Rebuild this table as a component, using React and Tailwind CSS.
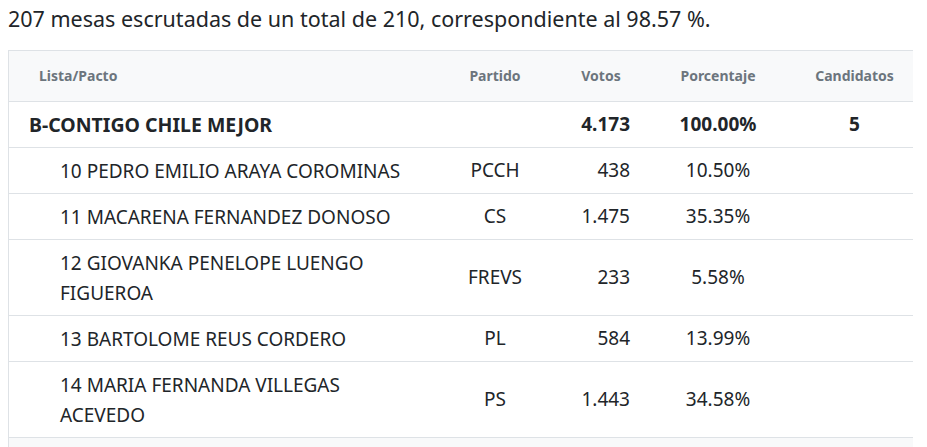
import React from "react";

const rows = [
  { name: "10 PEDRO EMILIO ARAYA COROMINAS", partido: "PCCH", votos: "438", pct: "10.50%" },
  { name: "11 MACARENA FERNANDEZ DONOSO", partido: "CS", votos: "1.475", pct: "35.35%" },
  { name: "12 GIOVANKA PENELOPE LUENGO FIGUEROA", partido: "FREVS", votos: "233", pct: "5.58%" },
  { name: "13 BARTOLOME REUS CORDERO", partido: "PL", votos: "584", pct: "13.99%" },
  { name: "14 MARIA FERNANDA VILLEGAS ACEVEDO", partido: "PS", votos: "1.443", pct: "34.58%" },
];

export default function App() {
  return (
    <div className="w-[927px] h-[447px] overflow-hidden bg-white text-[#212529]" style={{ fontFamily: '"Noto Sans", "Open Sans", sans-serif' }}>
      <div className="pl-[8px] pt-[4px] h-[50px] text-[21.5px] leading-[30px]">
        207 mesas escrutadas de un total de 210, correspondiente al 98.57 %.
      </div>
      <div className="ml-[8px] w-[905px] border-l border-t border-[#dee2e6] overflow-hidden">
        <table className="table-fixed border-collapse w-[906px]">
          <colgroup>
            <col className="w-[421px]" />
            <col className="w-[130px]" />
            <col className="w-[82px]" />
            <col className="w-[152px]" />
            <col className="w-[121px]" />
          </colgroup>
          <thead>
            <tr className="bg-[#f8f9fa] h-[50px] border-b border-[#dee2e6] text-[14px] font-bold text-[#6c757d]">
              <th className="text-left pl-[30px] font-bold">Lista/Pacto</th>
              <th className="text-center font-bold">Partido</th>
              <th className="text-center font-bold">Votos</th>
              <th className="text-center font-bold">Porcentaje</th>
              <th className="text-center font-bold">Candidatos</th>
            </tr>
          </thead>
          <tbody className="text-[19px] leading-[30px]">
            <tr className="border-b border-[#dee2e6] font-bold">
              <td className="pl-[20px] pt-[8px] pb-[7px] text-[19.5px]">B-CONTIGO CHILE MEJOR</td>
              <td></td>
              <td className="text-right pr-[12px]">4.173</td>
              <td className="text-center">100.00%</td>
              <td className="text-center">5</td>
            </tr>
            {rows.map((r) => (
              <tr key={r.name} className="border-b border-[#dee2e6]">
                <td className="pl-[51px] pr-[8px] pt-[8px] pb-[7px]">{r.name}</td>
                <td className="text-center">{r.partido}</td>
                <td className="text-right pr-[12px]">{r.votos}</td>
                <td className="text-center">{r.pct}</td>
                <td></td>
              </tr>
            ))}
            <tr className="bg-[#f8f9fa] h-[46px]">
              <td colSpan={5}></td>
            </tr>
          </tbody>
        </table>
      </div>
    </div>
  );
}
